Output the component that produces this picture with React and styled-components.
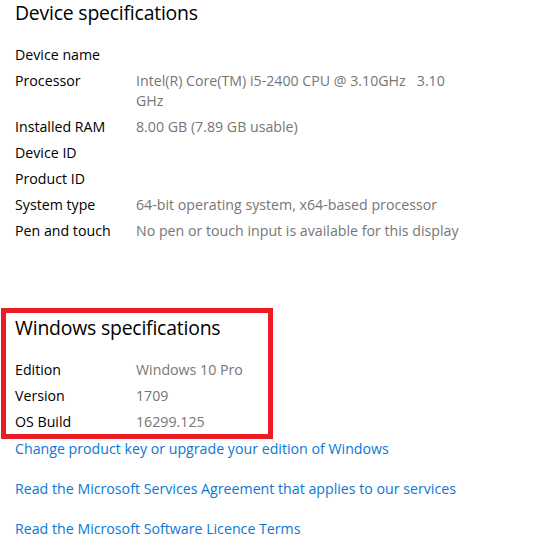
import React from "react";
import styled, { createGlobalStyle } from "styled-components";

const GlobalStyle = createGlobalStyle`
  body {
    margin: 0;
    background: #fff;
    font-family: "Open Sans", "Noto Sans", sans-serif;
  }
`;

const deviceSpecs = [
  { label: "Device name", value: "" },
  { label: "Processor", value: "Intel(R) Core(TM) i5-2400 CPU @ 3.10GHz   3.10\nGHz" },
  { label: "Installed RAM", value: "8.00 GB (7.89 GB usable)" },
  { label: "Device ID", value: "" },
  { label: "Product ID", value: "" },
  { label: "System type", value: "64-bit operating system, x64-based processor" },
  { label: "Pen and touch", value: "No pen or touch input is available for this display" },
];

const windowsSpecs = [
  { label: "Edition", value: "Windows 10 Pro" },
  { label: "Version", value: "1709" },
  { label: "OS Build", value: "16299.125" },
];

const links = [
  "Change product key or upgrade your edition of Windows",
  "Read the Microsoft Services Agreement that applies to our services",
  "Read the Microsoft Software Licence Terms",
];

const SpecTable = ({ rows }) => (
  <Table>
    {rows.map((row) => (
      <React.Fragment key={row.label}>
        <Label>{row.label}</Label>
        <Value>{row.value}</Value>
      </React.Fragment>
    ))}
  </Table>
);

const App = () => {
  return (
    <Page>
      <GlobalStyle />
      <Title>Device specifications</Title>
      <SpecTable rows={deviceSpecs} />

      <Highlight>
        <Title>Windows specifications</Title>
        <SpecTable rows={windowsSpecs} />
      </Highlight>

      <LinkList>
        {links.map((text) => (
          <SettingsLink key={text} href="#">
            {text}
          </SettingsLink>
        ))}
      </LinkList>
    </Page>
  );
};

export default App;

const Page = styled.div`
  padding: 1px 0 0 15px;
  width: 531px;
  height: 543px;
  overflow: hidden;
`;

const Title = styled.h2`
  margin: 0;
  font-size: 19.4px;
  font-weight: 400;
  line-height: 24px;
  color: #000;
  letter-spacing: -0.2px;
`;

const Table = styled.div`
  display: grid;
  grid-template-columns: 121px 1fr;
  row-gap: 6px;
  margin-top: 20px;
  font-size: 14.2px;
  line-height: 20px;
`;

const Label = styled.div`
  color: #000;
  white-space: nowrap;
`;

const Value = styled.div`
  color: #767676;
  white-space: pre-wrap;
`;

const Highlight = styled.section`
  margin: 67px 0 0 -14px;
  width: 253px;
  border: 5px solid #ec1c24;
  padding: 3px 0 2px 9px;
`;

const LinkList = styled.div`
  display: flex;
  flex-direction: column;
  gap: 20px;
`;

const SettingsLink = styled.a`
  color: #0a78d4;
  text-decoration: none;
  font-size: 14.2px;
  line-height: 20px;
  white-space: nowrap;
`;
